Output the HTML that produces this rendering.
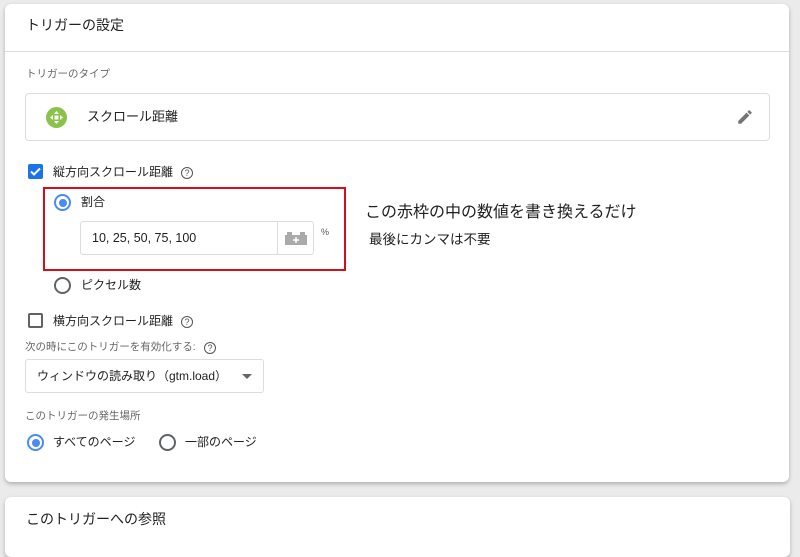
<!DOCTYPE html>
<html><head><meta charset="utf-8"><style>
*{margin:0;padding:0;box-sizing:border-box}
body{width:800px;height:533px;background:#ebebeb;font-family:"Liberation Sans","Noto Sans CJK JP",sans-serif;color:#212121;position:relative;overflow:hidden}
.a{position:absolute;white-space:nowrap;line-height:1}
.card{position:absolute;background:#fff;border-radius:6px;box-shadow:0 2px 4px rgba(0,0,0,.25)}
.radio{position:absolute;width:17px;height:17px;border:2px solid #5f6368;border-radius:50%}
.radio.on{border-color:#4a8af4}
.radio.on::after{content:"";position:absolute;left:2.5px;top:2.5px;width:8px;height:8px;border-radius:50%;background:#4a8af4}
.help{position:absolute;width:12px;height:12px;border:1.3px solid #555;border-radius:50%;font-size:9px;line-height:10px;text-align:center;color:#555}
.lbl{font-size:10.5px;color:#666}
.t14{font-size:12px}
</style></head><body>
<div class="card" style="left:5px;top:4px;width:784px;height:478px"></div>
<div class="card" style="left:5px;top:497px;width:785px;height:60px"></div>
<div class="a" style="left:5px;top:51px;width:784px;height:1px;background:#ddd"></div>
<div class="a" style="left:26px;top:18px;font-size:14px">トリガーの設定</div>
<div class="a lbl" style="left:26px;top:69px">トリガーのタイプ</div>
<div class="a" style="left:25px;top:93px;width:745px;height:48px;border:1px solid #ddd;border-radius:4px"></div>
<svg class="a" style="left:46px;top:107px" width="21" height="21" viewBox="0 0 21 21"><circle cx="10.5" cy="10.5" r="10.5" fill="#8bc34a"/><path d="M10.5 4l2.5 3h-5zM10.5 17l2.5-3h-5zM4 10.5l3-2.5v5zM17 10.5l-3-2.5v5z" fill="#fff"/><rect x="8.5" y="8.5" width="4" height="4" fill="#fff"/></svg>
<div class="a" style="left:87px;top:110px;font-size:13px">スクロール距離</div>
<svg class="a" style="left:736px;top:108px" width="18" height="18" viewBox="0 0 24 24"><path d="M3 17.25V21h3.75L17.81 9.94l-3.75-3.75L3 17.25zM20.71 7.04a1 1 0 000-1.41l-2.34-2.34a1 1 0 00-1.41 0l-1.83 1.83 3.75 3.75 1.83-1.83z" fill="#757575"/></svg>
<div class="a" style="left:28px;top:164px;width:15px;height:15px;background:#1a73e8;border-radius:2px"></div>
<svg class="a" style="left:28px;top:164px" width="15" height="15" viewBox="0 0 15 15"><path d="M3 7.5l3 3 6-6" stroke="#fff" stroke-width="2" fill="none"/></svg>
<div class="a t14" style="left:53px;top:166px">縦方向スクロール距離</div>
<div class="help" style="left:181px;top:167px">?</div>
<div class="a" style="left:43px;top:187px;width:303px;height:84px;border:2px solid #d0111b"></div>
<div class="radio on" style="left:54px;top:194px"></div>
<div class="a t14" style="left:81px;top:196px">割合</div>
<div class="a" style="left:80px;top:221px;width:234px;height:34px;border:1px solid #ddd;border-radius:3px"></div>
<div class="a" style="left:277px;top:222px;width:1px;height:32px;background:#ddd"></div>
<svg class="a" style="left:285px;top:231px" width="22" height="14" viewBox="0 0 22 14"><rect x="0" y="4" width="22" height="10" fill="#aaa"/><rect x="2" y="1" width="5" height="4" fill="#aaa"/><rect x="15" y="1" width="5" height="4" fill="#aaa"/><path d="M11 6v6M8 9h6" stroke="#fff" stroke-width="1.5"/></svg>
<div class="a" style="left:92px;top:232px;font-size:12.5px">10, 25, 50, 75, 100</div>
<div class="a" style="left:321px;top:228px;font-size:9px;color:#555">%</div>
<div class="a" style="left:365px;top:205px;font-size:16px">この赤枠の中の数値を書き換えるだけ</div>
<div class="a" style="left:369px;top:233px;font-size:13.5px">最後にカンマは不要</div>
<div class="radio" style="left:54px;top:277px"></div>
<div class="a t14" style="left:81px;top:279px">ピクセル数</div>
<div class="a" style="left:28px;top:313px;width:15px;height:15px;border:2px solid #5f6368;border-radius:2px"></div>
<div class="a t14" style="left:53px;top:315px">横方向スクロール距離</div>
<div class="help" style="left:181px;top:316px">?</div>
<div class="a lbl" style="left:25px;top:342px">次の時にこのトリガーを有効化する:</div>
<div class="help" style="left:204px;top:342px">?</div>
<div class="a" style="left:25px;top:359px;width:239px;height:34px;border:1px solid #ddd;border-radius:3px"></div>
<div class="a" style="left:37px;top:370px;font-size:12px">ウィンドウの読み取り（gtm.load）</div>
<div class="a" style="left:242px;top:374px;border-left:5px solid transparent;border-right:5px solid transparent;border-top:5px solid #666"></div>
<div class="a lbl" style="left:25px;top:411px">このトリガーの発生場所</div>
<div class="radio on" style="left:27px;top:434px"></div>
<div class="a t14" style="left:53px;top:436px">すべてのページ</div>
<div class="radio" style="left:159px;top:434px"></div>
<div class="a t14" style="left:185px;top:436px">一部のページ</div>
<div class="a" style="left:26px;top:512px;font-size:14px">このトリガーへの参照</div>
</body></html>
